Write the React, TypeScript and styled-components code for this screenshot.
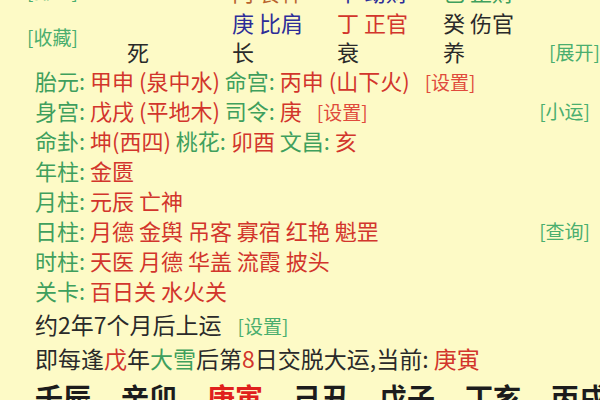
import React from 'react';
import styled, { createGlobalStyle } from 'styled-components';

const GREEN = '#3f9f5d';
const LINK_GREEN = '#4aae6e';
const RED = '#d2352c';
const LINK_RED = '#e04a3c';
const BLUE = '#2d2d98';
const DARK = '#2a2a2a';
const BG = '#fdfac6';

const GlobalStyle = createGlobalStyle`
  body {
    margin: 0;
    background: ${BG};
    font-family: "Noto Sans CJK SC", "Noto Sans", sans-serif;
    overflow: hidden;
  }
`;

const Page = styled.div`
  width: 600px;
  height: 400px;
  overflow: hidden;
  background: ${BG};
`;

const Inner = styled.div`
  margin-top: -26px;
`;

const PillarGrid = styled.div`
  display: grid;
  grid-template-columns: 100px 105px 105px 106px 106px 1fr;
  grid-template-rows: 33px 30px 28px;
  align-items: center;
  padding: 0 10px 0 27px;
  font-size: 22px;
  line-height: 1;
  white-space: nowrap;
`;

const Cell = styled.span<{ $col: number; $row: number; $tone?: string }>`
  grid-column: ${p => p.$col};
  grid-row: ${p => p.$row};
  color: ${p => p.$tone || DARK};
`;

const Link = styled.span<{ $tone?: string; $gap?: number }>`
  font-size: 19px;
  color: ${p => p.$tone || LINK_GREEN};
  margin-left: ${p => p.$gap || 0}px;
`;

const GridLink = styled(Link)<{ $col: number; $row: string }>`
  grid-column: ${p => p.$col};
  grid-row: ${p => p.$row};
  justify-self: ${p => (p.$col === 6 ? 'end' : 'start')};
  align-self: center;
`;

const InfoList = styled.div`
  display: flex;
  flex-direction: column;
  padding: 0 10px 0 35px;
`;

const InfoRow = styled.div`
  display: flex;
  align-items: center;
  justify-content: space-between;
  height: 30px;
  font-size: 22px;
  white-space: nowrap;
`;

const Label = styled.span`
  color: ${GREEN};
`;

const Value = styled.span`
  color: ${RED};
`;

const Note = styled.div<{ $top?: number }>`
  font-size: 23px;
  line-height: 33px;
  margin-top: ${p => p.$top || 0}px;
  color: ${DARK};
  white-space: nowrap;
`;

const Tint = styled.span<{ $tone: string }>`
  color: ${p => p.$tone};
`;

const LuckRow = styled.div`
  display: flex;
  gap: 30px;
  padding-left: 35px;
  font-size: 28px;
  font-weight: 700;
  line-height: 44px;
  white-space: nowrap;
`;

const LuckItem = styled.span<{ $current?: boolean }>`
  color: ${p => (p.$current ? '#e0201c' : '#1c1c1c')};
`;

const hidden = [
  { col: 3, row: 1, text: '丙 食神', tone: '#b8632e' },
  { col: 4, row: 1, text: '辛 劫财', tone: BLUE },
  { col: 5, row: 1, text: '己 正财', tone: GREEN },
  { col: 3, row: 2, text: '庚 比肩', tone: BLUE },
  { col: 4, row: 2, text: '丁 正官', tone: RED },
  { col: 5, row: 2, text: '癸 伤官', tone: DARK },
  { col: 2, row: 3, text: '死' },
  { col: 3, row: 3, text: '长' },
  { col: 4, row: 3, text: '衰' },
  { col: 5, row: 3, text: '养' },
];

const luck = ['壬辰', '辛卯', '庚寅', '己丑', '戊子', '丁亥', '丙戌'];

export default function App() {
  return (
    <Page>
      <GlobalStyle />
      <Inner>
        <PillarGrid>
          <GridLink $col={1} $row="1">[排盘]</GridLink>
          {hidden.map(h => (
            <Cell key={h.text} $col={h.col} $row={h.row} $tone={h.tone}>
              {h.text}
            </Cell>
          ))}
          <GridLink $col={1} $row="2 / span 2">[收藏]</GridLink>
          <GridLink $col={6} $row="3">[展开]</GridLink>
        </PillarGrid>

        <InfoList>
          <InfoRow>
            <span>
              <Label>胎元: </Label>
              <Value>甲申 (泉中水) </Value>
              <Label>命宫: </Label>
              <Value>丙申 (山下火)</Value>
              <Link $tone={LINK_RED} $gap={15}>[设置]</Link>
            </span>
          </InfoRow>
          <InfoRow>
            <span>
              <Label>身宫: </Label>
              <Value>戊戌 (平地木) </Value>
              <Label>司令: </Label>
              <Value>庚</Value>
              <Link $tone={LINK_RED} $gap={15}>[设置]</Link>
            </span>
            <Link>[小运]</Link>
          </InfoRow>
          <InfoRow>
            <span>
              <Label>命卦: </Label>
              <Value>坤(西四) </Value>
              <Label>桃花: </Label>
              <Value>卯酉 </Value>
              <Label>文昌: </Label>
              <Value>亥</Value>
            </span>
          </InfoRow>
          <InfoRow>
            <span>
              <Label>年柱: </Label>
              <Value>金匮</Value>
            </span>
          </InfoRow>
          <InfoRow>
            <span>
              <Label>月柱: </Label>
              <Value>元辰 亡神</Value>
            </span>
          </InfoRow>
          <InfoRow>
            <span>
              <Label>日柱: </Label>
              <Value>月德 金舆 吊客 寡宿 红艳 魁罡</Value>
            </span>
            <Link>[查询]</Link>
          </InfoRow>
          <InfoRow>
            <span>
              <Label>时柱: </Label>
              <Value>天医 月德 华盖 流霞 披头</Value>
            </span>
          </InfoRow>
          <InfoRow>
            <span>
              <Label>关卡: </Label>
              <Value>百日关 水火关</Value>
            </span>
          </InfoRow>

          <Note $top={3}>
            约2年7个月后上运
            <Link $gap={16}>[设置]</Link>
          </Note>
          <Note>
            即每逢<Tint $tone={RED}>戊</Tint>年<Tint $tone={GREEN}>大雪</Tint>后第
            <Tint $tone={RED}>8</Tint>日交脱大运,当前: <Tint $tone={RED}>庚寅</Tint>
          </Note>
        </InfoList>

        <LuckRow>
          {luck.map(l => (
            <LuckItem key={l} $current={l === '庚寅'}>
              {l}
            </LuckItem>
          ))}
        </LuckRow>
      </Inner>
    </Page>
  );
}
